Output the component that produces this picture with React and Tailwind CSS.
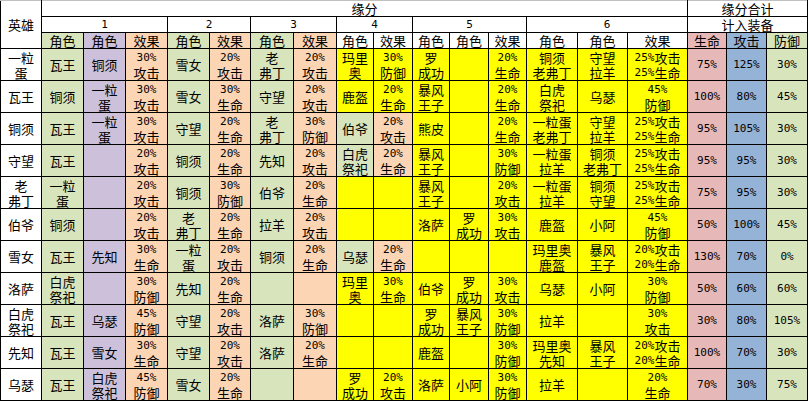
import React from 'react';

const G = 'bg-[#d8e4bc]';
const P = 'bg-[#ccc0da]';
const O = 'bg-[#fcd5b4]';
const Y = 'bg-[#ffff00]';
const K = 'bg-[#e6b8b7]';
const B = 'bg-[#95b3d7]';
const W = 'bg-white';

const widths = [41, 42, 42, 42, 42, 41, 43, 43, 37, 39, 37, 39, 38, 51, 50, 60, 39, 40, 41];
const colBg = [W, G, P, O, G, O, G, O, Y, Y, Y, Y, Y, Y, Y, Y, K, B, G];

// "/" marks a line break inside a cell
const rows = [
    ['一粒/蛋', '瓦王', '铜须', '30%/攻击', '雪女', '20%/攻击', '老/弗丁', '20%/攻击', '玛里/奥', '30%/防御', '罗/成功', '', '20%/生命', '铜须/老弗丁', '守望/拉羊', '25%攻击/25%生命', '75%', '125%', '30%'],
    ['瓦王', '铜须', '一粒/蛋', '30%/攻击', '雪女', '30%/生命', '守望', '20%/攻击', '鹿盔', '20%/生命', '暴风/王子', '', '20%/生命', '白虎/祭祀', '乌瑟', '45%/防御', '100%', '80%', '45%'],
    ['铜须', '瓦王', '一粒/蛋', '30%/攻击', '守望', '20%/生命', '老/弗丁', '30%/防御', '伯爷', '20%/攻击', '熊皮', '', '20%/生命', '一粒蛋/老弗丁', '守望/拉羊', '25%攻击/25%生命', '95%', '105%', '30%'],
    ['守望', '瓦王', '', '20%/攻击', '铜须', '20%/生命', '先知', '20%/攻击', '白虎/祭祀', '20%/生命', '暴风/王子', '', '30%/防御', '一粒蛋/拉羊', '铜须/老弗丁', '25%攻击/25%生命', '95%', '95%', '30%'],
    ['老/弗丁', '一粒/蛋', '', '20%/攻击', '铜须', '30%/防御', '伯爷', '20%/生命', '', '', '暴风/王子', '', '20%/攻击', '一粒蛋/拉羊', '铜须/守望', '25%攻击/25%生命', '75%', '95%', '30%'],
    ['伯爷', '铜须', '', '20%/攻击', '老/弗丁', '20%/生命', '拉羊', '20%/攻击', '', '', '洛萨', '罗/成功', '30%/攻击', '鹿盔', '小阿', '45%/防御', '50%', '100%', '45%'],
    ['雪女', '瓦王', '先知', '30%/生命', '一粒/蛋', '20%/攻击', '铜须', '20%/生命', '乌瑟', '20%/生命', '', '', '', '玛里奥/鹿盔', '暴风/王子', '20%攻击/20%生命', '130%', '70%', '0%'],
    ['洛萨', '白虎/祭祀', '', '30%/防御', '先知', '20%/生命', '', '', '玛里/奥', '30%/生命', '伯爷', '罗/成功', '30%/攻击', '乌瑟', '小阿', '30%/防御', '50%', '60%', '60%'],
    ['白虎/祭祀', '瓦王', '乌瑟', '45%/防御', '守望', '20%/攻击', '洛萨', '30%/防御', '', '', '罗/成功', '暴风/王子', '30%/防御', '拉羊', '', '30%/攻击', '30%', '80%', '105%'],
    ['先知', '瓦王', '雪女', '30%/生命', '守望', '20%/攻击', '洛萨', '20%/生命', '', '', '鹿盔', '', '30%/防御', '玛里奥/先知', '暴风/王子', '20%攻击/20%生命', '100%', '70%', '30%'],
    ['乌瑟', '瓦王', '白虎/祭祀', '45%/防御', '雪女', '20%/生命', '', '', '罗/成功', '20%/攻击', '洛萨', '小阿', '30%/防御', '拉羊', '', '20%/生命', '70%', '30%', '75%'],
];

// rows where group 4 is coloured like groups 1-3
const overrides = { 2: { 8: G, 9: O }, 3: { 8: G, 9: O }, 6: { 8: G, 9: O } };

const Line = ({ s }) => (
    <div className="flex h-[15px] items-center justify-center whitespace-nowrap">
        {s.split(/([\x00-\x7f]+)/).filter(Boolean).map((part, i) =>
            /^[\x00-\x7f]+$/.test(part)
                ? <span key={i} className="font-['DejaVu_Sans_Mono',monospace] text-[11px] leading-[15px]">{part}</span>
                : <span key={i} className="leading-[15px]">{part}</span>
        )}
    </div>
);

const Cell = ({ text, bg, className = '', ...rest }) => (
    <td className={`border border-black p-0 text-center align-middle ${bg} ${className}`} {...rest}>
        {text ? text.split('/').map((s, i) => <Line key={i} s={s} />) : null}
    </td>
);

export default function App() {
    return (
        <div className="w-[809px] h-[401px] bg-white overflow-hidden">
            <table className="table-fixed border-collapse text-black text-[13px] leading-[15px] font-['Noto_Sans_CJK_SC',sans-serif]">
                <colgroup>
                    {widths.map((w, i) => <col key={i} style={{ width: w }} />)}
                </colgroup>
                <tbody>
                    <tr className="h-[16px]">
                        <Cell text="英雄" bg={W} rowSpan={3} className="border-t-[#c0c0c0]" />
                        <Cell text="缘分" bg={W} colSpan={15} className="border-t-[#c0c0c0]" />
                        <Cell text="缘分合计" bg={W} colSpan={3} className="border-t-[#c0c0c0]" />
                    </tr>
                    <tr className="h-[16px]">
                        <Cell text="1" bg={W} colSpan={3} />
                        <Cell text="2" bg={W} colSpan={2} />
                        <Cell text="3" bg={W} colSpan={2} />
                        <Cell text="4" bg={W} colSpan={2} />
                        <Cell text="5" bg={W} colSpan={3} />
                        <Cell text="6" bg={W} colSpan={3} />
                        <Cell text="计入装备" bg={W} colSpan={3} />
                    </tr>
                    <tr className="h-[16px]">
                        <Cell text="角色" bg={G} />
                        <Cell text="角色" bg={P} />
                        <Cell text="效果" bg={O} />
                        <Cell text="角色" bg={G} />
                        <Cell text="效果" bg={O} />
                        <Cell text="角色" bg={G} />
                        <Cell text="效果" bg={O} />
                        <Cell text="角色" bg={W} />
                        <Cell text="效果" bg={W} />
                        <Cell text="角色" bg={W} />
                        <Cell text="角色" bg={W} />
                        <Cell text="效果" bg={W} />
                        <Cell text="角色" bg={W} />
                        <Cell text="角色" bg={W} />
                        <Cell text="效果" bg={W} />
                        <Cell text="生命" bg={K} />
                        <Cell text="攻击" bg={B} />
                        <Cell text="防御" bg={G} />
                    </tr>
                    {rows.map((row, r) => (
                        <tr key={r} className="h-[32px]">
                            {row.map((t, c) => (
                                <Cell key={c} text={t} bg={(overrides[r] && overrides[r][c]) || colBg[c]} />
                            ))}
                        </tr>
                    ))}
                </tbody>
            </table>
        </div>
    );
}
